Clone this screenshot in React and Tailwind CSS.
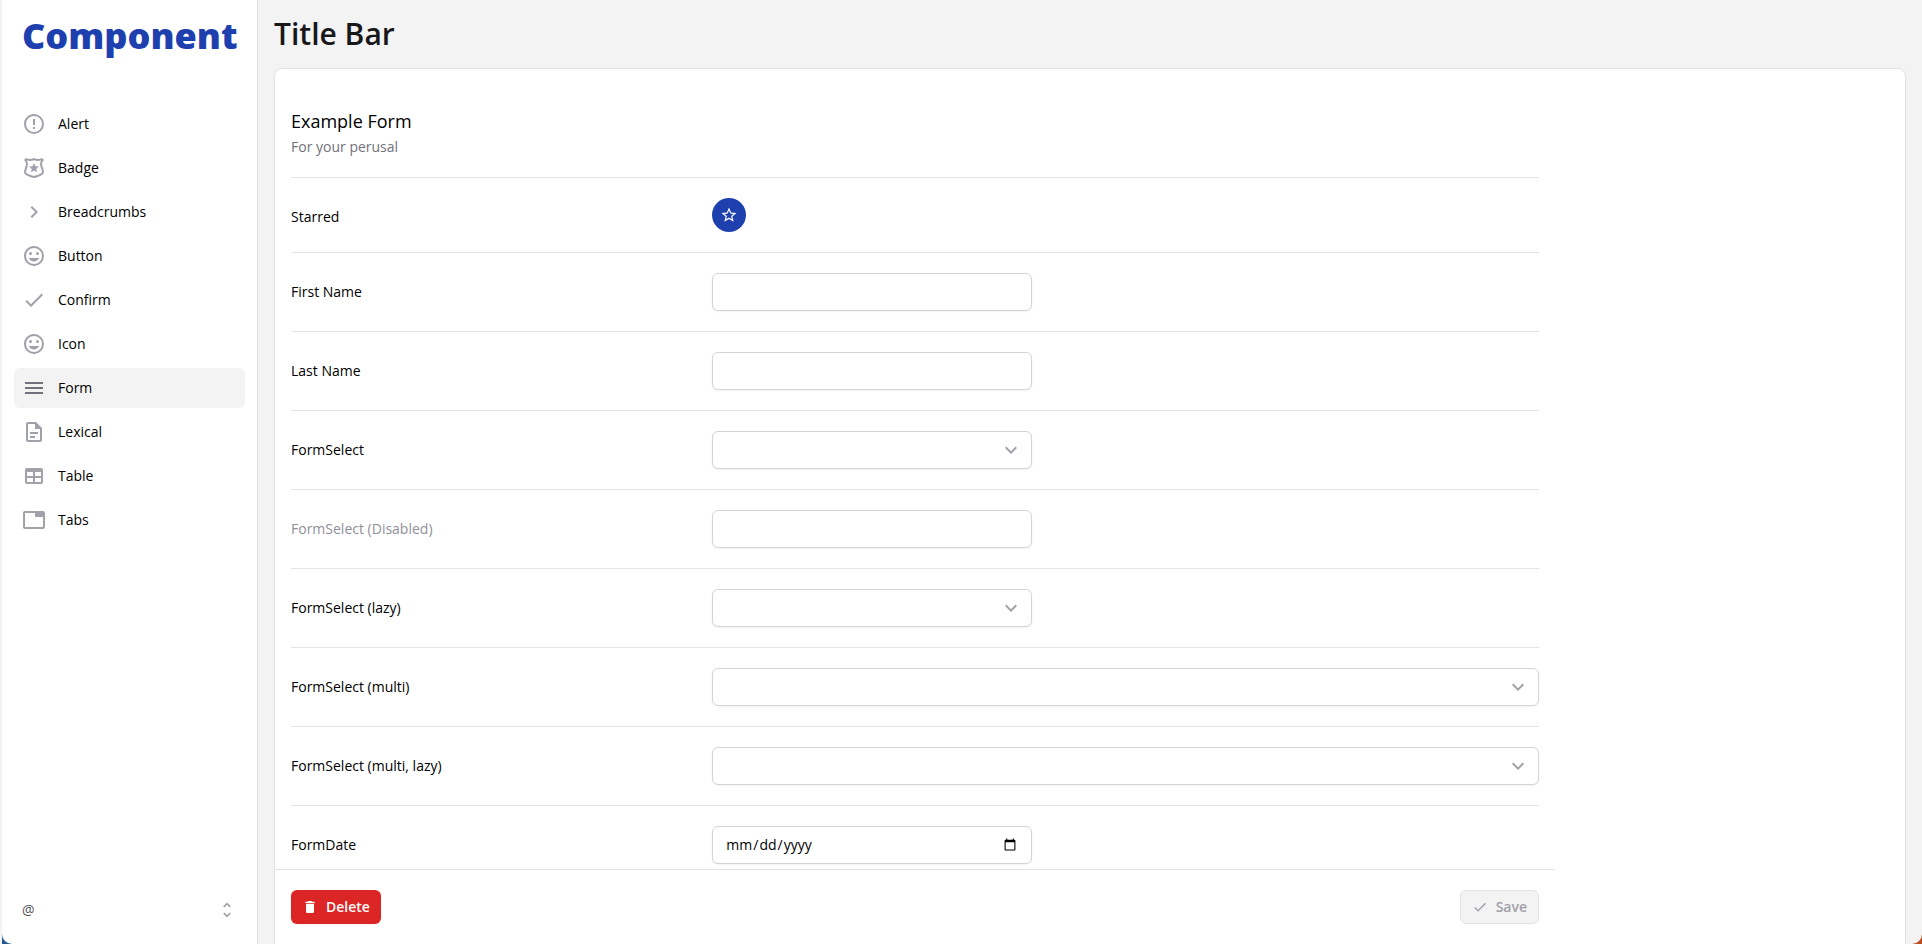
import React, { useState } from 'react';

const icons = {
  alert: 'M11,15H13V17H11V15M11,7H13V13H11V7M12,2C6.47,2 2,6.5 2,12A10,10 0 0,0 12,22A10,10 0 0,0 22,12A10,10 0 0,0 12,2M12,20A8,8 0 0,1 4,12A8,8 0 0,1 12,4A8,8 0 0,1 20,12A8,8 0 0,1 12,20Z',
  badge: 'M22,4L20,2C18.85,2.64 17.4,3 16,3C14.59,3 13.14,2.63 12,2C10.86,2.63 9.41,3 8,3C6.6,3 5.15,2.64 4,2L2,4C2,4 4,6 4,8S2,14 2,16C2,20 12,22 12,22S22,20 22,16C22,14 20,10 20,8S22,4 22,4M12,20C7.3,19 4.1,17.2 4,16C4,14 6,10.6 6,8C6,6.6 5.3,5.2 4.6,4.2C5.7,4.8 6.8,5 8,5C9.4,5 10.8,4.7 12,4.2C13.2,4.7 14.6,5 16,5C17.2,5 18.3,4.8 19.4,4.2C18.7,5.2 18,6.6 18,8C18,10.6 20,14 20,16C19.9,17.2 16.7,19 12,20M15.05,16.45L11.97,14.59L8.9,16.45L9.72,12.95L7,10.61L10.58,10.3L11.97,7L13.37,10.29L16.95,10.6L14.23,12.94L15.05,16.45Z',
  chevronRight: 'M8.59,16.58L13.17,12L8.59,7.41L10,6L16,12L10,18L8.59,16.58Z',
  chevronDown: 'M7.41,8.58L12,13.17L16.59,8.58L18,10L12,16L6,10L7.41,8.58Z',
  emoticon: 'M12,17.5C14.33,17.5 16.3,16.04 17.11,14H6.89C7.69,16.04 9.67,17.5 12,17.5M8.5,11A1.5,1.5 0 0,0 10,9.5A1.5,1.5 0 0,0 8.5,8A1.5,1.5 0 0,0 7,9.5A1.5,1.5 0 0,0 8.5,11M15.5,11A1.5,1.5 0 0,0 17,9.5A1.5,1.5 0 0,0 15.5,8A1.5,1.5 0 0,0 14,9.5A1.5,1.5 0 0,0 15.5,11M12,20A8,8 0 0,1 4,12A8,8 0 0,1 12,4A8,8 0 0,1 20,12A8,8 0 0,1 12,20M12,2C6.47,2 2,6.5 2,12A10,10 0 0,0 12,22A10,10 0 0,0 22,12A10,10 0 0,0 12,2Z',
  check: 'M21,7L9,19L3.5,13.5L4.91,12.09L9,16.17L19.59,5.59L21,7Z',
  menu: 'M3,6H21V8H3V6M3,11H21V13H3V11M3,16H21V18H3V16Z',
  document: 'M6,2A2,2 0 0,0 4,4V20A2,2 0 0,0 6,22H18A2,2 0 0,0 20,20V8L14,2H6M6,4H13V9H18V20H6V4M8,12V14H16V12H8M8,16V18H13V16H8Z',
  table: 'M5,4H19A2,2 0 0,1 21,6V18A2,2 0 0,1 19,20H5A2,2 0 0,1 3,18V6A2,2 0 0,1 5,4M5,8V12H11V8H5M13,8V12H19V8H13M5,14V18H11V14H5M13,14V18H19V14H13Z',
  tab: 'M21,3H3A2,2 0 0,0 1,5V19A2,2 0 0,0 3,21H21A2,2 0 0,0 23,19V5A2,2 0 0,0 21,3M21,19H3V5H13V9H21V19Z',
  star: 'M12,15.39L8.24,17.66L9.23,13.38L5.91,10.5L10.29,10.13L12,6.09L13.71,10.13L18.09,10.5L14.77,13.38L15.76,17.66M22,9.24L14.81,8.63L12,2L9.19,8.63L2,9.24L7.45,13.97L5.82,21L12,17.27L18.18,21L16.54,13.97L22,9.24Z',
  trash: 'M19,4H15.5L14.5,3H9.5L8.5,4H5V6H19M6,19A2,2 0 0,0 8,21H16A2,2 0 0,0 18,19V7H6V19Z',
  unfold: 'M12,18.17L8.83,15L7.42,16.41L12,21L16.59,16.41L15.17,15M12,5.83L15.17,9L16.58,7.59L12,3L7.41,7.59L8.83,9L12,5.83Z',
};

const navigation = [
  { name: 'Alert', icon: 'alert' },
  { name: 'Badge', icon: 'badge' },
  { name: 'Breadcrumbs', icon: 'chevronRight' },
  { name: 'Button', icon: 'emoticon' },
  { name: 'Confirm', icon: 'check' },
  { name: 'Icon', icon: 'emoticon' },
  { name: 'Form', icon: 'menu', current: true },
  { name: 'Lexical', icon: 'document' },
  { name: 'Table', icon: 'table' },
  { name: 'Tabs', icon: 'tab' },
];

const inputClass = 'block h-[38px] w-full rounded-md border border-[#d4d4d8] bg-white px-3 shadow-xs';

function Icon({ name, className }) {
  return (
    <svg viewBox="0 0 24 24" fill="currentColor" fillRule="evenodd" aria-hidden="true" className={className}>
      <path d={icons[name]} />
    </svg>
  );
}

function Sidebar() {
  return (
    <aside className="flex w-64 shrink-0 flex-col rounded-bl-[10px] border-r border-[#e2e2e4] bg-white px-3">
      <div className="px-2 pt-3 text-4xl leading-12 font-extrabold text-[#1e40af]">Component</div>
      <nav className="mt-11 flex flex-col gap-1">
        {navigation.map((item) => (
          <a
            key={item.name}
            href="#"
            aria-current={item.current ? 'page' : undefined}
            className={`flex h-10 items-center gap-3 rounded-md px-2 text-sm font-medium text-black ${item.current ? 'bg-[#f3f3f3]' : ''}`}
          >
            <Icon name={item.icon} className={`size-6 ${item.current ? 'text-[#71717a]' : 'text-[#a1a1aa]'}`} />
            {item.name}
          </a>
        ))}
      </nav>
      <button type="button" className="mt-auto mb-4 flex h-9 items-center justify-between px-2 text-sm text-[#52525b]">
        <span>@</span>
        <Icon name="unfold" className="size-5 text-[#a1a1aa]" />
      </button>
    </aside>
  );
}

function FormRow({ label, id, disabled, children }) {
  return (
    <div className="grid grid-cols-3 items-start gap-4 border-t border-[#e4e4e7] py-5">
      <label
        htmlFor={id}
        className={`pt-2 text-sm leading-[22px] font-medium ${disabled ? 'text-[#8f8f99]' : 'text-black'}`}
      >
        {label}
      </label>
      <div className="col-span-2">{children}</div>
    </div>
  );
}

function FormSelect({ label, id, multi, disabled }) {
  return (
    <FormRow label={label} id={id} disabled={disabled}>
      <div className={`relative ${multi ? '' : 'max-w-80'}`}>
        <select id={id} disabled={disabled} className={`${inputClass} appearance-none pr-10`} />
        {!disabled && (
          <Icon name="chevronDown" className="pointer-events-none absolute inset-y-0 right-[9px] my-auto size-6 text-[#a1a1aa]" />
        )}
      </div>
    </FormRow>
  );
}

export default function App() {
  const [values, setValues] = useState({ firstName: '', lastName: '', date: '' });

  const handleChange = (e) => {
    setValues({ ...values, [e.target.id]: e.target.value });
  };

  return (
    <div className="flex h-screen bg-[#f3f3f3] pl-0.5 font-['Open_Sans',sans-serif] text-[#18181b]">
      <div className="flex shrink-0 bg-[#24588f]">
        <Sidebar />
      </div>
      <div className="flex min-w-0 flex-1 bg-[#c04a22]">
        <main className="min-w-0 flex-1 overflow-y-auto rounded-br-[10px] bg-[#f3f3f3] px-4 [scrollbar-width:none]">
          <h1 className="pt-4 pb-4 text-3xl font-semibold">Title Bar</h1>
          <div className="rounded-lg border border-[#e2e2e4] bg-white">
            <form className="max-w-7xl" onSubmit={(e) => e.preventDefault()}>
              <div className="px-4 pt-10">
                <div className="pb-5">
                  <h2 className="text-lg leading-6 font-medium text-black">Example Form</h2>
                  <p className="mt-1 text-sm text-[#71717a]">For your perusal</p>
                </div>
                <FormRow label="Starred" id="starred">
                  <button
                    id="starred"
                    type="button"
                    className="flex size-[34px] items-center justify-center rounded-full bg-[#1e40af] text-white"
                  >
                    <Icon name="star" className="size-[18px]" />
                  </button>
                </FormRow>
                <FormRow label="First Name" id="firstName">
                  <input id="firstName" type="text" value={values.firstName} onChange={handleChange} className={`${inputClass} max-w-80`} />
                </FormRow>
                <FormRow label="Last Name" id="lastName">
                  <input id="lastName" type="text" value={values.lastName} onChange={handleChange} className={`${inputClass} max-w-80`} />
                </FormRow>
                <FormSelect label="FormSelect" id="select" />
                <FormSelect label="FormSelect (Disabled)" id="selectDisabled" disabled />
                <FormSelect label="FormSelect (lazy)" id="selectLazy" />
                <FormSelect label="FormSelect (multi)" id="selectMulti" multi />
                <FormSelect label="FormSelect (multi, lazy)" id="selectMultiLazy" multi />
                <FormRow label="FormDate" id="date">
                  <input id="date" type="date" value={values.date} onChange={handleChange} className={`${inputClass} max-w-80 text-sm text-black`} />
                </FormRow>
              </div>
              <div className="sticky bottom-0 flex justify-between border-t border-[#e2e2e4] bg-white px-4 py-5">
                <button
                  type="button"
                  className="flex h-[34px] items-center gap-2 rounded-md bg-[#dc2626] px-[11px] text-sm font-semibold text-white shadow-xs"
                >
                  <Icon name="trash" className="size-4" />
                  Delete
                </button>
                <button
                  type="submit"
                  disabled
                  className="flex h-[34px] items-center gap-2 rounded-md border border-[#e4e4e7] bg-[#f3f3f3] px-[11px] text-sm font-semibold text-[#a1a1aa]"
                >
                  <Icon name="check" className="size-4" />
                  Save
                </button>
              </div>
            </form>
          </div>
        </main>
      </div>
    </div>
  );
}
